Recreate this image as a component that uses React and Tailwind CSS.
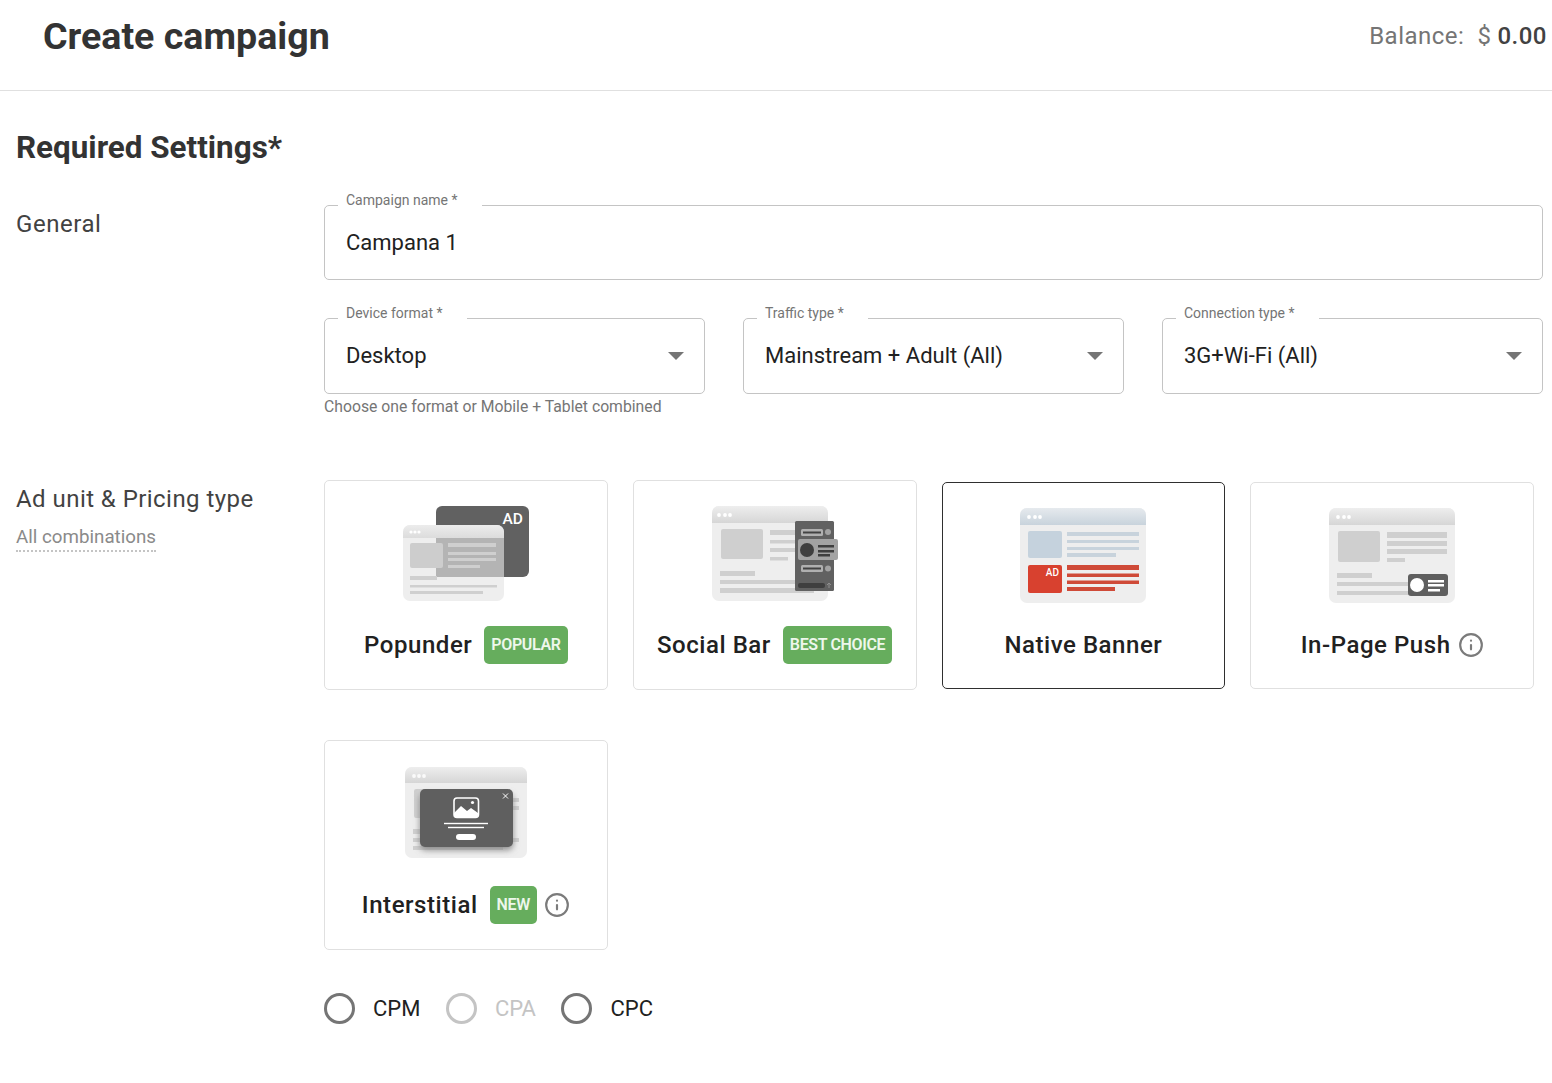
import { Info } from "lucide-react";

const Dots = ({ xs, y = 9, fill = "#fff", r = 1.9 }) => (
  <>
    {xs.map((x) => (
      <circle key={x} cx={x} cy={y} r={r} fill={fill} />
    ))}
  </>
);

const Bars = ({ items, fill = "#cfcfcf" }) => (
  <>
    {items.map(([x, y, w, h], i) => (
      <rect key={i} x={x} y={y} width={w} height={h} fill={fill} />
    ))}
  </>
);

const Browser = ({ id, w, h, head = 17, from = "#eeeeee", to = "#d6d6d6", body = "#eeeeee" }) => (
  <>
    <defs>
      <linearGradient id={id} x1="0" y1="0" x2="0" y2="1">
        <stop offset="0" stopColor={from} />
        <stop offset="1" stopColor={to} />
      </linearGradient>
    </defs>
    <rect width={w} height={h} rx="7" fill={body} />
    <path d={`M0 ${head}V7a7 7 0 0 1 7-7H${w - 7}a7 7 0 0 1 7 7V${head}Z`} fill={`url(#${id})`} />
  </>
);

const PopunderArt = () => (
  <svg width="126" height="95" viewBox="0 0 126 95" className="block">
    <rect x="33" width="93" height="71" rx="6" fill="#616161" />
    <text x="120" y="18" textAnchor="end" fontSize="15.5" fontWeight="500" fill="#fff">AD</text>
    <g transform="translate(0 19)">
      <Browser id="pop" w={101} h={76} head={13} from="#ececec" to="#dcdcdc" />
      <Dots xs={[8, 12, 16]} y={7} r={1.6} />
    </g>
    <rect x="33" y="32" width="68" height="39" fill="#b4b4b4" />
    <rect x="7" y="37" width="33" height="25" rx="2" fill="#cdcdcd" />
    <Bars items={[[45, 37, 48, 4], [45, 46, 48, 3], [45, 52, 48, 3], [45, 59, 32, 3], [7, 70, 27, 4], [7, 79, 87, 2.5], [7, 85, 73, 3]]} />
  </svg>
);

const SocialArt = () => (
  <svg width="126" height="95" viewBox="0 0 126 95" className="block">
    <Browser id="soc" w={116} h={95} />
    <Dots xs={[7, 13, 18]} />
    <rect x="9" y="23" width="42" height="30" rx="2" fill="#cfcfcf" />
    <Bars items={[[58, 24, 30, 5], [58, 34, 30, 3.5], [58, 42, 30, 4], [58, 51, 18, 3.5], [8, 65, 35, 5], [8, 74, 80, 4], [8, 82, 94, 5]]} />
    <rect x="83" y="15" width="39" height="70" rx="1.5" fill="#616161" />
    <rect x="89" y="23" width="22" height="7" rx="1.5" fill="#b0b0b0" />
    <rect x="91" y="25.5" width="18" height="2" fill="#424242" />
    <circle cx="116" cy="26" r="3" fill="#a3a3a3" />
    <rect x="86" y="33" width="40" height="21" rx="2" fill="#a3a3a3" />
    <circle cx="95" cy="44" r="7" fill="#3f3f3f" />
    <Bars fill="#3f3f3f" items={[[106, 39, 16, 2.5], [106, 44, 16, 2.5], [106, 48, 12, 2.5]]} />
    <rect x="89" y="59" width="22" height="7" rx="1.5" fill="#b0b0b0" />
    <rect x="91" y="61.5" width="18" height="2" fill="#424242" />
    <circle cx="116" cy="62.5" r="3" fill="#a3a3a3" />
    <rect x="86" y="77" width="27" height="5" rx="2" fill="#3f3f3f" />
    <path d="M117 82v-5M115 79l2-2 2 2" stroke="#8f8f8f" strokeWidth="1" fill="none" />
  </svg>
);

const NativeArt = () => (
  <svg width="126" height="95" viewBox="0 0 126 95" className="block">
    <Browser id="nat" w={126} h={95} from="#e6eaee" to="#c8d3dc" />
    <Dots xs={[9, 15, 20]} />
    <rect x="8" y="23" width="34" height="27" rx="2" fill="#c5d2dd" />
    <Bars fill="#c8d3dc" items={[[47, 24, 72, 4], [47, 32, 72, 3], [47, 39, 72, 3], [47, 45, 49, 4]]} />
    <rect x="8" y="57" width="34" height="28" rx="2" fill="#d8412f" />
    <text x="39" y="68" textAnchor="end" fontSize="10" fontWeight="500" fill="#fff">AD</text>
    <Bars fill="#cf4a38" items={[[47, 57, 72, 5], [47, 65.5, 72, 3.5], [47, 72.5, 72, 3.5], [47, 79, 48, 4]]} />
  </svg>
);

const PushArt = () => (
  <svg width="126" height="95" viewBox="0 0 126 95" className="block">
    <Browser id="psh" w={126} h={95} />
    <Dots xs={[9, 15, 20]} />
    <rect x="9" y="23" width="42" height="31" rx="2" fill="#cfcfcf" />
    <Bars items={[[58, 24, 60, 6], [58, 33, 60, 5], [58, 41, 60, 5], [58, 50, 18, 4], [8, 65, 35, 5], [8, 74, 75, 4], [8, 83, 75, 4]]} />
    <rect x="79" y="66" width="40" height="22" rx="3" fill="#5f5f5f" />
    <circle cx="88" cy="77" r="7" fill="#fff" />
    <Bars fill="#fff" items={[[99, 72, 16, 2.5], [99, 76, 16, 2.5], [99, 81, 12, 2.5]]} />
  </svg>
);

const InterstitialArt = () => (
  <svg width="122" height="91" viewBox="0 0 122 91" className="mt-[1px] mb-[3px] block">
    <defs>
      <filter id="blur" x="-20%" y="-20%" width="140%" height="150%">
        <feGaussianBlur stdDeviation="3" />
      </filter>
    </defs>
    <Browser id="int" w={122} h={91} head={16} />
    <Dots xs={[9, 14, 19]} fill="#fafafa" />
    <rect x="9" y="22" width="40" height="29" rx="2" fill="#cfcfcf" />
    <Bars items={[[60, 31, 54, 4], [60, 39, 54, 4], [8, 62, 40, 5], [8, 71, 106, 4], [8, 79, 90, 4]]} />
    <rect x="15" y="27" width="93" height="56" rx="5" fill="#8a8a8a" filter="url(#blur)" />
    <rect x="15" y="22" width="93" height="58" rx="5" fill="#5f5f5f" />
    <path d="M98 26.5l5 5M103 26.5l-5 5" stroke="#fff" strokeWidth="1" />
    <rect x="49" y="31" width="24.5" height="19.5" rx="3" fill="none" stroke="#fff" strokeWidth="1.6" />
    <path d="M49 46l7-7 6 5 4-3 7 5v2a3 3 0 0 1-3 3H52a3 3 0 0 1-3-3Z" fill="#fff" />
    <circle cx="67.5" cy="35.5" r="1.6" fill="#fff" />
    <rect x="39" y="55.8" width="44" height="1.4" fill="#fff" />
    <rect x="43" y="59.8" width="36" height="1.4" fill="#fff" />
    <rect x="51" y="67" width="20" height="6" rx="3" fill="#fff" />
  </svg>
);

const Badge = ({ children }) => (
  <span className="ml-3 flex h-[38px] items-center rounded-[5px] bg-[#66ad5d] px-[7px] text-[16px] font-semibold tracking-[-0.35px] text-[#eef7ec]">
    {children}
  </span>
);

const Hint = ({ className }) => (
  <Info size={26} strokeWidth={2} className={`text-[#7b7b7b] ${className}`} />
);

const UnitCard = ({ art, name, selected, thin, children }) => (
  <div
    className={`flex flex-col items-center rounded-[5px] border bg-white ${
      selected ? "border-[#2f2f2f]" : "border-[#e0e0e0]"
    } ${thin ? "mt-[2px] h-[207px] pt-[25px]" : "h-[210px] pt-[25px]"}`}
  >
    {art}
    <div className={`flex h-[38px] items-center ${thin ? "mt-[23px]" : "mt-[25px]"}`}>
      <span className="text-[24px] font-medium tracking-[0.55px] text-[#212121]">{name}</span>
      {children}
    </div>
  </div>
);

const Field = ({ label, value, select, tall }) => (
  <div className={`relative flex items-center rounded-[5px] border border-[#c4c4c4] pl-[21px] pr-[20px] ${tall ? "h-[76px]" : "h-[75px]"}`}>
    <label className="absolute -top-[14px] left-[13px] bg-white pl-2 pr-6 text-[14px] leading-4 text-[#757575]">
      {label} *
    </label>
    <span className={`flex-1 text-[22px] text-[#212121] ${tall ? "-mt-[2px]" : ""}`}>{value}</span>
    {select && (
      <svg width="16" height="8" viewBox="0 0 16 8">
        <polygon points="0,0 16,0 8,8" fill="#757575" />
      </svg>
    )}
  </div>
);

const Radio = ({ label, disabled }) => (
  <label className="flex items-center gap-[18px]">
    <span className={`size-[31px] rounded-full border-[3.5px] ${disabled ? "border-[#c4c4c4]" : "border-[#757575]"}`} />
    <span className={`text-[22px] ${disabled ? "text-[#c4c4c4]" : "text-[#212121]"}`}>{label}</span>
  </label>
);

export default function App() {
  return (
    <div className="h-[1083px] overflow-hidden bg-white font-['Roboto',sans-serif] text-[#333]">
      <header className="flex h-[91px] items-center justify-between border-b border-[#e0e0e0] pl-[43px] pr-[5px]">
        <h1 className="-mt-[17px] text-[37.6px] font-bold text-[#333]">Create campaign</h1>
        <div className="-mt-[18px] flex items-center text-[24px] tracking-[0.5px] text-[#757575]">
          Balance:
          <span className="ml-[13px]">$</span>
          <span className="ml-[6px] font-medium text-[#424242]">0.00</span>
        </div>
      </header>

      <main className="pl-4">
        <h2 className="mt-[38px] text-[31.4px] leading-[38px] font-bold text-[#333]">Required Settings*</h2>

        <section className="mt-[38px] flex">
          <div className="w-[308px] pt-[1px] text-[24px] leading-9 tracking-[0.55px] text-[#424242]">General</div>
          <div className="w-[1219px]">
            <Field label="Campaign name" value="Campana 1" />
            <div className="mt-[38px] grid grid-cols-3 gap-[38px]">
              <Field tall select label="Device format" value="Desktop" />
              <Field tall select label="Traffic type" value="Mainstream + Adult (All)" />
              <Field tall select label="Connection type" value="3G+Wi-Fi (All)" />
            </div>
            <p className="mt-[1px] text-[15.75px] leading-6 text-[#757575]">Choose one format or Mobile + Tablet combined</p>
          </div>
        </section>

        <section className="mt-[61px] flex">
          <div className="w-[308px]">
            <div className="pt-[1px] text-[24px] leading-9 tracking-[0.45px] text-[#424242]">Ad unit &amp; Pricing type</div>
            <span className="mt-[8px] inline-block border-b-2 border-dotted border-[#c4c4c4] text-[18.75px] leading-[25px] text-[#8a8a8a]">
              All combinations
            </span>
          </div>
          <div>
            <div className="grid w-[1210px] grid-cols-4 gap-x-[25px] gap-y-[50px]">
              <UnitCard art={<PopunderArt />} name="Popunder"><Badge>POPULAR</Badge></UnitCard>
              <UnitCard art={<SocialArt />} name="Social Bar"><Badge>BEST CHOICE</Badge></UnitCard>
              <UnitCard art={<NativeArt />} name="Native Banner" selected thin />
              <UnitCard art={<PushArt />} name="In-Page Push" thin><Hint className="ml-[7px]" /></UnitCard>
              <UnitCard art={<InterstitialArt />} name="Interstitial">
                <Badge>NEW</Badge>
                <Hint className="ml-[7px]" />
              </UnitCard>
            </div>
            <div className="mt-[42px] flex items-center gap-[25.5px]">
              <Radio label="CPM" />
              <Radio label="CPA" disabled />
              <Radio label="CPC" />
            </div>
          </div>
        </section>
      </main>
    </div>
  );
}
